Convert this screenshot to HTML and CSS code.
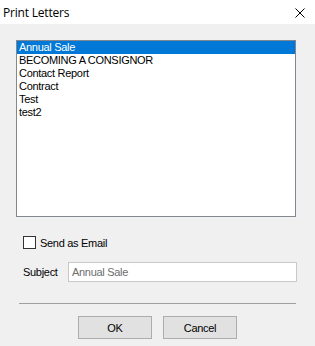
FILE: index.html
```html
<!DOCTYPE html>
<html lang="en">
<head>
  <meta charset="UTF-8">
  <title>Print Letters</title>
  <link rel="stylesheet" href="styles.css">
</head>
<body>

  <header class="title-bar">
    <span class="title">Print Letters</span>
    <span class="close-button">
      <svg width="10" height="10" viewBox="0 0 10 10">
        <path d="M0.5 0.5 L9.5 9.5 M9.5 0.5 L0.5 9.5" stroke="#000" stroke-width="1" fill="none"/>
      </svg>
    </span>
  </header>

  <section class="dialog">
    <!-- Letters list -->
    <ul class="letter-list">
      <li class="selected">Annual Sale</li>
      <li>BECOMING A CONSIGNOR</li>
      <li>Contact Report</li>
      <li>Contract</li>
      <li>Test</li>
      <li>test2</li>
    </ul>

    <!-- Email options -->
    <label class="email-option">
      <span class="check-box"></span>
      <span>Send as Email</span>
    </label>

    <div class="subject-row">
      <span class="subject-label">Subject</span>
      <div class="subject-input">Annual Sale</div>
    </div>

    <hr class="separator">

    <div class="button-row">
      <button class="dialog-button">OK</button>
      <button class="dialog-button">Cancel</button>
    </div>
  </section>

</body>
</html>
```

FILE: styles.css
```css
body {
  font-family: 'Liberation Sans', Arial, sans-serif;
  font-size: 11px;
  margin: 0;
  padding: 0;
  background-color: #f0f0f0;
  color: #000;
}

.title-bar {
  height: 24px;
  background-color: #fff;
  display: flex;
  align-items: center;
  justify-content: space-between;
  padding: 0 10px 0 3px;
}

.title {
  font-family: 'Open Sans', sans-serif;
  font-size: 12px;
  letter-spacing: -0.2px;
}

.close-button {
  display: flex;
  margin-top: 1px;
}

.dialog {
  padding: 16px 19px 0 16px;
}

.letter-list {
  list-style: none;
  margin: 0;
  padding: 0;
  height: 175px;
  background-color: #fff;
  border: 1px solid #828790;
}

.letter-list li {
  height: 13px;
  line-height: 13px;
  padding-left: 2px;
  letter-spacing: -0.3px;
}

.letter-list li.selected {
  background-color: #0078d7;
  color: #fff;
}

.email-option {
  display: flex;
  align-items: center;
  gap: 4px;
  margin: 19px 0 0 7px;
  letter-spacing: -0.3px;
}

.check-box {
  width: 11px;
  height: 11px;
  border: 1px solid #333;
  background-color: #fff;
}

.subject-row {
  display: flex;
  align-items: center;
  margin-top: 13px;
  padding-left: 7px;
}

.subject-label {
  width: 45px;
  letter-spacing: -0.3px;
}

.subject-input {
  flex: 1;
  height: 18px;
  line-height: 18px;
  margin-right: -1px;
  padding-left: 3px;
  background-color: #fff;
  border: 1px solid #c8c8c8;
  color: #6d6d6d;
  letter-spacing: -0.3px;
}

.separator {
  border: none;
  border-top: 1px solid #a0a0a0;
  margin: 21px 0 0 3px;
}

.button-row {
  display: flex;
  justify-content: center;
  gap: 11px;
  margin-top: 12px;
  padding-left: 3px;
}

.dialog-button {
  width: 74px;
  height: 23px;
  padding: 0;
  font-family: 'Liberation Sans', Arial, sans-serif;
  font-size: 11px;
  letter-spacing: -0.3px;
  background-color: #e1e1e1;
  border: 1px solid #adadad;
  color: #000;
}
```
